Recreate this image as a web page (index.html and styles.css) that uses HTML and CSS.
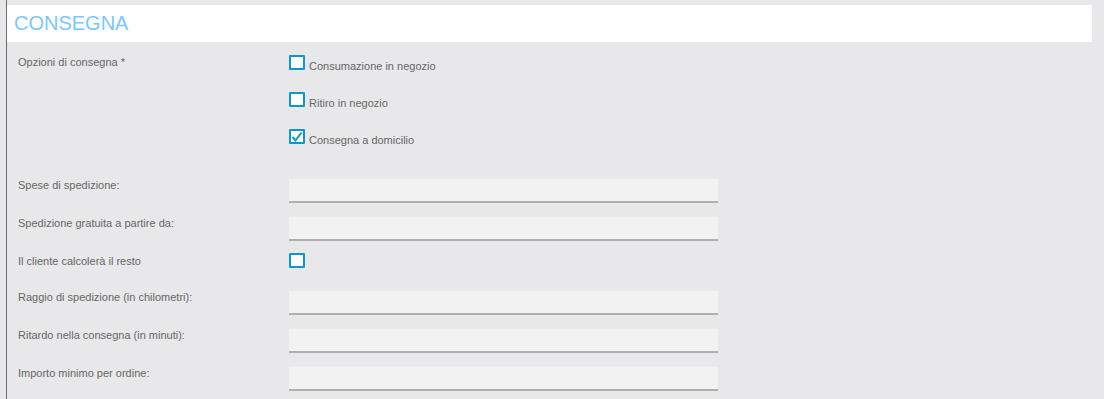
FILE: index.html
```html
<!DOCTYPE html>
<html lang="it">
<head>
  <meta charset="UTF-8">
  <title>Consegna</title>
  <link rel="stylesheet" href="styles.css">
</head>
<body>
  <div class="panel">
    <!-- Intestazione sezione -->
    <div class="panel-header">
      <h2>CONSEGNA</h2>
    </div>

    <div class="form">
      <!-- Opzioni di consegna -->
      <div class="row row-options">
        <div class="label">Opzioni di consegna *</div>
        <div class="options">
          <label class="option"><span class="check"></span>Consumazione in negozio</label>
          <label class="option"><span class="check"></span>Ritiro in negozio</label>
          <label class="option"><span class="check checked"><svg viewBox="0 0 12 12" width="12" height="12"><polyline points="1.5,6 4.5,9.5 10.5,1.5" fill="none" stroke="#0e96c7" stroke-width="2"/></svg></span>Consegna a domicilio</label>
        </div>
      </div>

      <div class="row">
        <div class="label">Spese di spedizione:</div>
        <input type="text" class="field">
      </div>

      <div class="row">
        <div class="label">Spedizione gratuita a partire da:</div>
        <input type="text" class="field">
      </div>

      <div class="row row-check">
        <div class="label">Il cliente calcolerà il resto</div>
        <span class="check"></span>
      </div>

      <div class="row">
        <div class="label">Raggio di spedizione (in chilometri):</div>
        <input type="text" class="field">
      </div>

      <div class="row">
        <div class="label">Ritardo nella consegna (in minuti):</div>
        <input type="text" class="field">
      </div>

      <div class="row row-last">
        <div class="label">Importo minimo per ordine:</div>
        <input type="text" class="field">
      </div>
    </div>
  </div>
</body>
</html>
```

FILE: styles.css
```css
body {
  font-family: "Liberation Sans", Arial, sans-serif;
  margin: 0;
  padding: 0;
  background-color: #e8e8ea;
  color: #666;
}
.panel {
  margin: 0 12px 0 6px;
  border-left: 1px solid #6b6b6b;
  min-height: 100vh;
  padding-top: 5px;
  box-sizing: border-box;
}
.panel-header {
  background-color: #ffffff;
  height: 37px;
  padding-left: 7px;
}
.panel-header h2 {
  margin: 0;
  font-size: 20px;
  font-weight: normal;
  line-height: 37px;
  color: #80c6fb;
}
.form {
  padding: 13px 0 0 11px;
}
.row {
  display: flex;
  align-items: flex-start;
  min-height: 25px;
  margin-bottom: 13px;
}
.row-options {
  margin-bottom: 31px;
}
.row-check {
  min-height: 23px;
  margin-bottom: 13px;
}
.row-check .check {
  margin-top: -1px;
}
.row-last {
  margin-top: 1px;
}
.label {
  width: 271px;
  flex-shrink: 0;
  font-size: 11px;
  line-height: 13px;
  padding-top: 1px;
}
.options {
  display: flex;
  flex-direction: column;
  gap: 19px;
}
.option {
  font-size: 11px;
  line-height: 13px;
  color: #666;
}
.check {
  display: inline-block;
  width: 12px;
  height: 11px;
  border: 2px solid #0e96c7;
  border-radius: 1px;
  background-color: #ffffff;
  margin-right: 4px;
  position: relative;
}
.check svg {
  position: absolute;
  left: 0;
  top: 0;
}
.field {
  width: 429px;
  height: 25px;
  box-sizing: border-box;
  border: none;
  border-top: 1px solid #ececec;
  border-bottom: 2px solid #afafaf;
  background-color: #f2f2f2;
  margin: 0;
  padding: 0 6px;
}
```
